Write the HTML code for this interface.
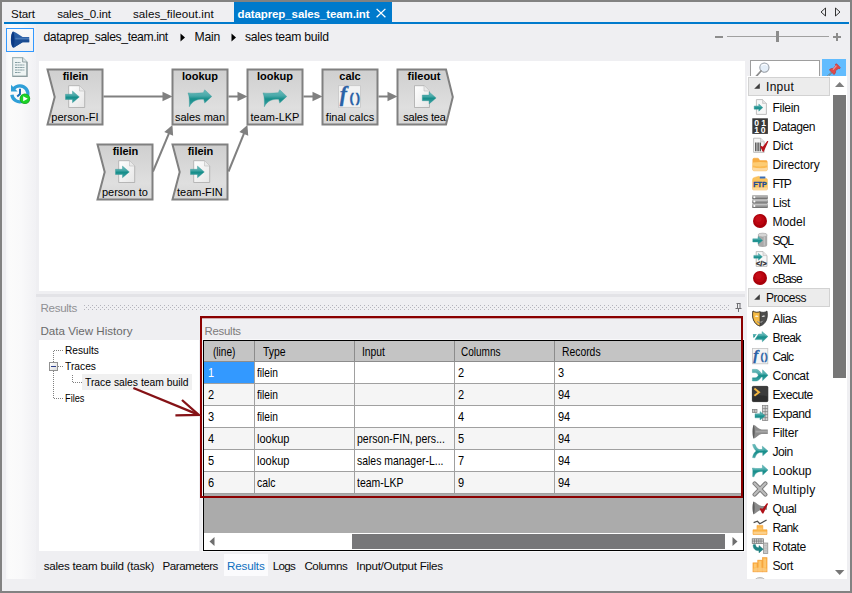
<!DOCTYPE html>
<html><head><meta charset="utf-8"><title>dataprep_sales_team.int</title><style>
html,body{margin:0;padding:0;}
body{width:852px;height:593px;overflow:hidden;background:#efeff2;position:relative;font-family:"Liberation Sans",sans-serif;font-size:11.4px;color:#0a0a0a;}
.a{position:absolute;}
.t{position:absolute;white-space:nowrap;line-height:14px;height:14px;}
.ms{font-size:11px;color:#000;}
svg{position:absolute;overflow:visible;}

.pi{position:absolute;left:772px;white-space:nowrap;line-height:14px;height:14px;font-size:11.4px;color:#1e1e1e;}
</style></head><body>
<div class="a" style="left:0px;top:0px;width:852px;height:2px;background:#828282"></div>
<div class="a" style="left:0px;top:0px;width:2px;height:593px;background:#828282"></div>
<div class="a" style="left:850px;top:0px;width:2px;height:593px;background:#828282"></div>
<div class="a" style="left:0px;top:591px;width:852px;height:2px;background:#828282"></div>
<div class="a" style="left:4px;top:22px;width:845px;height:2px;background:#007acc"></div>
<div class="a" style="left:234px;top:2px;width:158px;height:20px;background:#007acc"></div>
<div class="t" style="left:11px;top:7px;font-size:11.6px;letter-spacing:-0.100px;">Start</div>
<div class="t" style="left:57.2px;top:7px;font-size:11.6px;letter-spacing:-0.169px;">sales_0.int</div>
<div class="t" style="left:133px;top:7px;font-size:11.6px;letter-spacing:0.046px;">sales_fileout.int</div>
<div class="t" style="left:237.5px;top:7px;font-size:11.5px;letter-spacing:-0.097px;color:#fff;font-weight:bold;">dataprep_sales_team.int</div>
<svg style="left:376px;top:8px" width="10" height="10" viewBox="0 0 10 10"><path d="M0.6 0.9 L9.4 9.3 M9.4 0.9 L0.6 9.3" stroke="#fff" stroke-width="1.3" fill="none"/></svg>
<svg style="left:820px;top:7px" width="22" height="10" viewBox="0 0 22 10"><path d="M5.5 1 L5.5 9 L1 5 Z" fill="none" stroke="#1e1e1e" stroke-width="0.9"/><path d="M15.5 1 L15.5 9 L20 5 Z" fill="none" stroke="#1e1e1e" stroke-width="0.9"/></svg>
<div class="a" style="left:6px;top:24px;width:30px;height:555px;background:linear-gradient(90deg,#f6f6f8 0,#fbfbfb 10%,#f9f9fa 50%,#f1f1f4 100%)"></div>
<div class="a" style="left:6px;top:28px;width:27px;height:23px;border:1px solid #3399ff;background:linear-gradient(180deg,#fafafa,#f0f0f2);width:26px;height:22px"></div>
<svg style="left:10px;top:31px" width="20" height="17" viewBox="0 0 20 17"><path d="M3 0.4 C0.2 2.8 0.2 14.2 3 16.6 C4 16.6 5 16 6 15.2 L12.6 11.2 L19.2 11.2 L19.2 6 L12.6 6 L6 1.8 C5 1 4 0.4 3 0.4 Z" fill="#2a5fa6"/><path d="M3 8.5 L3 16.6 C4 16.6 5 16 6 15.2 L12.6 11.2 L19.2 11.2 L19.2 8.5 Z" fill="#1a4c92"/><path d="M3 0.5 C0.4 3 0.4 14 3 16.5 C5 13.4 5 3.6 3 0.5 Z" fill="#0b3a84"/><path d="M5.4 7.6 L19 7.6" stroke="#6a98cc" stroke-width="1.6" opacity="0.5"/></svg>
<svg style="left:12px;top:57px" width="16" height="20" viewBox="0 0 16 20"><path d="M0.6 0.6 L10.6 0.6 L15 5 L15 19.4 L0.6 19.4 Z" fill="#eef4f4" stroke="#a4b6b8" stroke-width="1.2"/><path d="M1 19.4 H15 V5" fill="none" stroke="#8c9c9e" stroke-width="1.1"/><path d="M10.6 0.6 L10.6 5 L15 5" fill="#dfe9e9" stroke="#8c9c9e" stroke-width="0.9"/><path d="M3 5.5 H8.5 M3 8 H12.4 M3 10.5 H12.4 M3 13 H12.4 M3 15.5 H8.5" stroke="#6a888e" stroke-width="1" stroke-dasharray="2.6 0.5 1.6 0.4" opacity="0.8"/></svg>
<svg style="left:10px;top:84px" width="21" height="21" viewBox="0 0 21 21"><path d="M1.9 10.8 A8 8 0 1 0 3.6 4.8" fill="none" stroke="#2f9fd8" stroke-width="3.3"/><path d="M1 0.7 L1 7.4 L7.6 7.4 Z" fill="#2f9fd8"/><path d="M10 4.8 V10 L7.2 12.4" fill="none" stroke="#1a6eb8" stroke-width="2"/><circle cx="14.9" cy="14.7" r="5.3" fill="#1fa82a"/><circle cx="14.9" cy="14.7" r="4.5" fill="#1ad426"/><path d="M13.2 12.2 L17.8 14.7 L13.2 17.2 Z" fill="#fff"/></svg>
<div class="t" style="left:43.4px;top:30px;font-size:12.2px;letter-spacing:-0.392px;">dataprep_sales_team.int</div>
<div class="t" style="left:194.5px;top:30px;font-size:12.2px;letter-spacing:-0.236px;">Main</div>
<div class="t" style="left:245px;top:30px;font-size:12.2px;letter-spacing:-0.276px;">sales team build</div>
<svg style="left:180px;top:33px" width="6" height="9" viewBox="0 0 6 9"><path d="M0.5 0.5 L5 4.5 L0.5 8.5 Z" fill="#000"/></svg>
<svg style="left:231px;top:33px" width="6" height="9" viewBox="0 0 6 9"><path d="M0.5 0.5 L5 4.5 L0.5 8.5 Z" fill="#000"/></svg>
<div class="a" style="left:715px;top:36px;width:8px;height:2px;background:#8c8c8c"></div>
<div class="a" style="left:727px;top:36px;width:102px;height:1px;background:#a0a0a0"></div>
<div class="a" style="left:776px;top:31px;width:3px;height:11px;background:#8c8c8c"></div>
<div class="a" style="left:833px;top:36px;width:8px;height:2px;background:#8c8c8c"></div>
<div class="a" style="left:836px;top:33px;width:2px;height:8px;background:#8c8c8c"></div>
<div class="a" style="left:39px;top:61px;width:706px;height:230px;background:#fff"></div>
<svg style="left:0;top:0" width="852" height="593" viewBox="0 0 852 593" font-family="Liberation Sans, sans-serif"><defs><linearGradient id="ng" x1="0" y1="0" x2="0" y2="1"><stop offset="0" stop-color="#cfcfcf"/><stop offset="0.7" stop-color="#dfdfdf"/><stop offset="1" stop-color="#d6d6d6"/></linearGradient><linearGradient id="tg" x1="0" y1="0" x2="0" y2="1"><stop offset="0" stop-color="#6cbcbc"/><stop offset="0.36" stop-color="#48a8a8"/><stop offset="0.54" stop-color="#168e8a"/><stop offset="0.8" stop-color="#2f9a9a"/><stop offset="1" stop-color="#48a8a8"/></linearGradient><linearGradient id="pg" x1="0" y1="0" x2="1" y2="1"><stop offset="0" stop-color="#ffffff"/><stop offset="1" stop-color="#e6e6e6"/></linearGradient></defs><path d="M103.5 96.5 H166.5" stroke="#808080" stroke-width="2" fill="none"/><path d="M172.5 96.5 L162.5 91.7 L162.5 101.3 Z" fill="#808080"/><path d="M228.5 96.5 H241.5" stroke="#808080" stroke-width="2" fill="none"/><path d="M247.5 96.5 L237.5 91.7 L237.5 101.3 Z" fill="#808080"/><path d="M303.5 96.5 H316.5" stroke="#808080" stroke-width="2" fill="none"/><path d="M322.5 96.5 L312.5 91.7 L312.5 101.3 Z" fill="#808080"/><path d="M378.5 96.5 H391.5" stroke="#808080" stroke-width="2" fill="none"/><path d="M397.5 96.5 L387.5 91.7 L387.5 101.3 Z" fill="#808080"/><path d="M153 171.5 L169.47 132.01" stroke="#808080" stroke-width="2" fill="none"/><path d="M172.4 125 L173.13 135.71 L164.27 132.01 Z" fill="#808080"/><path d="M228.5 171.5 L244.54 132.04" stroke="#808080" stroke-width="2" fill="none"/><path d="M247.4 125 L248.23 135.70 L239.34 132.09 Z" fill="#808080"/><path d="M47.5 69.5 L102.5 69.5 L102.5 124.5 L47.5 124.5 L54.7 97.0 Z" fill="url(#ng)" stroke="#808080" stroke-width="2" stroke-linejoin="miter"/><text x="75.5" y="80.3" text-anchor="middle" font-weight="bold" font-size="11" fill="#000">filein</text><text x="74.9" y="120.7" text-anchor="middle" font-size="11" fill="#000">person-FI</text><path d="M68.7 85.7 L79.5 85.7 L84.7 91.0 L84.7 107.5 L68.7 107.5 Z" fill="url(#pg)" stroke="#a9a9a9" stroke-width="0.8"/><path d="M79.5 85.7 L79.5 91.0 L84.7 91.0" fill="#e9e9e9" stroke="#bdbdbd" stroke-width="0.6"/><path d="M65.5 94.3 L72.5 94.3 L72.5 91.1 L79.3 96.9 L72.5 102.7 L72.5 99.5 L65.5 99.5 Z" fill="url(#tg)" stroke="#2e9494" stroke-width="0.4" stroke-linejoin="round"/><path d="M172.5 69.5 H227.5 V124.5 H172.5 Z" fill="url(#ng)" stroke="#808080" stroke-width="2" stroke-linejoin="miter"/><text x="200.0" y="80.3" text-anchor="middle" font-weight="bold" font-size="11" fill="#000">lookup</text><text x="200.0" y="120.7" text-anchor="middle" font-size="11" fill="#000">sales man</text><path d="M188.0 92.9 C192.5 93.5 198.5 93.1 203.3 92.7 L204.7 89.8 L211.8 96.4 L204.7 103.0 L203.7 99.2 C197.5 99.0 192.5 100.5 189.3 106.8 C189.5 101.5 189.5 96.5 188.0 92.9 Z" fill="url(#tg)" stroke="#3a9c9c" stroke-width="0.4" stroke-linejoin="round"/><path d="M247.5 69.5 H302.5 V124.5 H247.5 Z" fill="url(#ng)" stroke="#808080" stroke-width="2" stroke-linejoin="miter"/><text x="275.0" y="80.3" text-anchor="middle" font-weight="bold" font-size="11" fill="#000">lookup</text><text x="275.0" y="120.7" text-anchor="middle" font-size="11" fill="#000">team-LKP</text><path d="M263.0 92.9 C267.5 93.5 273.5 93.1 278.3 92.7 L279.7 89.8 L286.8 96.4 L279.7 103.0 L278.7 99.2 C272.5 99.0 267.5 100.5 264.3 106.8 C264.5 101.5 264.5 96.5 263.0 92.9 Z" fill="url(#tg)" stroke="#3a9c9c" stroke-width="0.4" stroke-linejoin="round"/><path d="M322.5 69.5 H377.5 V124.5 H322.5 Z" fill="url(#ng)" stroke="#808080" stroke-width="2" stroke-linejoin="miter"/><text x="350.0" y="80.3" text-anchor="middle" font-weight="bold" font-size="11" fill="#000">calc</text><text x="350.0" y="120.7" text-anchor="middle" font-size="11" fill="#000">final calcs</text><rect x="338.5" y="85.7" width="22" height="21.6" fill="#f3f3f3" stroke="#c6c6c6" stroke-width="0.8"/><text x="339.7" y="100.9" font-family="Liberation Serif, serif" font-style="italic" font-weight="bold" font-size="21.5" fill="#2a62a6" stroke="#2a62a6" stroke-width="0.3">f</text><text x="349.5" y="101.7" font-family="Liberation Sans, sans-serif" font-weight="bold" font-size="13" fill="#2a62a6" stroke="#2a62a6" stroke-width="0.3">(</text><text x="355.7" y="101.7" font-family="Liberation Sans, sans-serif" font-weight="bold" font-size="13" fill="#2a62a6" stroke="#2a62a6" stroke-width="0.3">)</text><path d="M397.5 69.5 L446.0 69.5 L452.8 97.0 L446.0 124.5 L397.5 124.5 Z" fill="url(#ng)"/><text x="424.0" y="80.3" text-anchor="middle" font-weight="bold" font-size="11" fill="#000">fileout</text><clipPath id="c1"><rect x="397.5" y="109.5" width="48.3" height="15"/></clipPath><g clip-path="url(#c1)"><text x="403.3" y="120.7" font-size="11" fill="#000" textLength="51.6" lengthAdjust="spacing">sales team</text></g><path d="M397.5 69.5 L446.0 69.5 L452.8 97.0 L446.0 124.5 L397.5 124.5 Z" fill="none" stroke="#808080" stroke-width="2" stroke-linejoin="miter"/><path d="M414.5 85.7 L424.0 85.7 L429.5 91.0 L429.5 107.5 L414.5 107.5 Z" fill="url(#pg)" stroke="#a9a9a9" stroke-width="0.8"/><path d="M424.0 85.7 L424.0 91.0 L429.5 91.0" fill="#e9e9e9" stroke="#bdbdbd" stroke-width="0.6"/><path d="M422.3 95.1 L429.1 95.1 L429.1 91.9 L436.1 97.9 L429.1 103.9 L429.1 100.7 L422.3 100.7 Z" fill="url(#tg)" stroke="#2e9494" stroke-width="0.4" stroke-linejoin="round"/><path d="M97.5 144.5 L152.5 144.5 L152.5 199.5 L97.5 199.5 L104.7 172.0 Z" fill="url(#ng)" stroke="#808080" stroke-width="2" stroke-linejoin="miter"/><text x="125.5" y="155.3" text-anchor="middle" font-weight="bold" font-size="11" fill="#000">filein</text><text x="124.9" y="195.7" text-anchor="middle" font-size="11" fill="#000">person to</text><path d="M118.7 160.7 L129.5 160.7 L134.7 166.0 L134.7 182.5 L118.7 182.5 Z" fill="url(#pg)" stroke="#a9a9a9" stroke-width="0.8"/><path d="M129.5 160.7 L129.5 166.0 L134.7 166.0" fill="#e9e9e9" stroke="#bdbdbd" stroke-width="0.6"/><path d="M115.5 169.3 L122.5 169.3 L122.5 166.1 L129.3 171.9 L122.5 177.7 L122.5 174.5 L115.5 174.5 Z" fill="url(#tg)" stroke="#2e9494" stroke-width="0.4" stroke-linejoin="round"/><path d="M172.5 144.5 L227.5 144.5 L227.5 199.5 L172.5 199.5 L179.7 172.0 Z" fill="url(#ng)" stroke="#808080" stroke-width="2" stroke-linejoin="miter"/><text x="200.5" y="155.3" text-anchor="middle" font-weight="bold" font-size="11" fill="#000">filein</text><text x="199.9" y="195.7" text-anchor="middle" font-size="11" fill="#000">team-FIN</text><path d="M193.7 160.7 L204.5 160.7 L209.7 166.0 L209.7 182.5 L193.7 182.5 Z" fill="url(#pg)" stroke="#a9a9a9" stroke-width="0.8"/><path d="M204.5 160.7 L204.5 166.0 L209.7 166.0" fill="#e9e9e9" stroke="#bdbdbd" stroke-width="0.6"/><path d="M190.5 169.3 L197.5 169.3 L197.5 166.1 L204.3 171.9 L197.5 177.7 L197.5 174.5 L190.5 174.5 Z" fill="url(#tg)" stroke="#2e9494" stroke-width="0.4" stroke-linejoin="round"/></svg>
<div class="a" style="left:36px;top:294px;width:709px;height:3px;background:#e3e3e7"></div>
<div class="a" style="left:750px;top:60px;width:68px;height:17px;border:1px solid #9e9e9e;background:#fff"></div>
<svg style="left:755px;top:62px" width="15" height="16" viewBox="0 0 15 16"><circle cx="9.4" cy="5.6" r="4.6" fill="#e4eef8" stroke="#9aa0a8" stroke-width="1.1"/><path d="M6.4 4.2 A3.4 3.4 0 0 1 12 3.6" fill="none" stroke="#fff" stroke-width="1"/><path d="M6 9 L1 14.6" stroke="#8e8e8e" stroke-width="1.8" stroke-linecap="round"/></svg>
<div class="a" style="left:822px;top:59px;width:24px;height:17px;background:#62bcfe;overflow:hidden"><svg style="left:3.4px;top:4px" width="16" height="16" viewBox="0 0 16 16"><path d="M0.4 15.6 L6.6 9.4" stroke="#5a7a8a" stroke-width="1.4" stroke-linecap="round"/><path d="M0.4 15.6 L6.6 9.4" stroke="#e8f0f4" stroke-width="0.6" stroke-dasharray="1 1"/><path d="M4.4 7 C5.4 5.4 7 5.2 8.2 5.6 L10.6 2.6 C10 1.6 10.6 0.6 11.6 0.8 L15.2 4.4 C15.4 5.4 14.4 6 13.4 5.4 L10.4 7.8 C10.8 9 10.6 10.6 9 11.6 Z" fill="#e04a4a" stroke="#b83030" stroke-width="0.6" stroke-linejoin="round"/><path d="M8 6.6 L11.4 2.6" stroke="#f4a0a0" stroke-width="1.2" opacity="0.9"/></svg></div>
<div class="a" style="left:747px;top:76px;width:100px;height:503px;background:#fff;overflow:hidden">
<div class="a" style="left:1px;top:1px;width:80px;height:17px;border:1px solid #d2d2d2;background:#ececec"></div><svg style="left:6.899999999999977px;top:6.6px" width="6" height="6" viewBox="0 0 6 6"><path d="M5.8 0.2 V5.8 H0.2 Z" fill="#3c3c3c"/></svg><div class="t" style="left:19px;top:3.6px;font-size:12px;letter-spacing:0.302px;">Input</div>
<svg style="left:5px;top:23px" width="16" height="16" viewBox="0 0 16 16"><path d="M4.4 0.6 L10.6 0.6 L14.4 4.4 L14.4 15.4 L4.4 15.4 Z" fill="#f7f7f7" stroke="#b0b0b0" stroke-width="0.8"/><path d="M10.6 0.6 V4.4 H14.4" fill="#e4e4e4" stroke="#b8b8b8" stroke-width="0.6"/><path d="M2.2 7 H6.8 V5 L10.8 8.6 L6.8 12.2 V10.2 H2.2 Z" fill="url(#tg)" stroke="#2e9494" stroke-width="0.4"/></svg>
<div class="t" style="left:25.5px;top:24.8px;font-size:12.1px;letter-spacing:-0.336px;">Filein</div>
<svg style="left:5px;top:42px" width="16" height="16" viewBox="0 0 16 16"><rect x="0.3" y="0.3" width="15.6" height="15.6" fill="#383838"/><text x="2.2" y="7.8" font-family="Liberation Sans, sans-serif" font-weight="bold" font-size="8.6" fill="#fff">0</text><text x="9.2" y="7.8" font-family="Liberation Sans, sans-serif" font-weight="bold" font-size="8.6" fill="#fff">1</text><text x="2.2" y="15.2" font-family="Liberation Sans, sans-serif" font-weight="bold" font-size="8.6" fill="#fff">1</text><text x="8.8" y="15.2" font-family="Liberation Sans, sans-serif" font-weight="bold" font-size="8.6" fill="#fff">0</text></svg>
<div class="t" style="left:25.5px;top:43.8px;font-size:12.1px;letter-spacing:-0.464px;">Datagen</div>
<svg style="left:5px;top:61px" width="16" height="16" viewBox="0 0 16 16"><path d="M1.6 1.2 L8.6 1.2 L12.2 4.8 L12.2 15.4 L1.6 15.4 Z" fill="#f7f7f7" stroke="#b0b0b0" stroke-width="0.8"/><path d="M8.6 1.2 V4.8 H12.2" fill="#e6e6e6" stroke="#b8b8b8" stroke-width="0.6"/><path d="M3.8 5.6 V14.2 M6.1 5.6 V14.2 M8.3 5.6 V14.2" stroke="#5a5a5a" stroke-width="1.5"/><path d="M9 9.6 L11.2 14.2 L15.6 4.6 L11 10.6 Z" fill="#b8141c" stroke="#b8141c" stroke-width="1.3" stroke-linejoin="round"/></svg>
<div class="t" style="left:25.5px;top:62.8px;font-size:12.1px;letter-spacing:-0.185px;">Dict</div>
<svg style="left:5px;top:80px" width="16" height="16" viewBox="0 0 16 16"><path d="M0.8 3.6 Q0.8 2.2 2.2 2.2 H5.6 Q6.6 2.2 7 3.2 L7.6 4.6 H14 Q15.2 4.6 15.2 5.8 V13.6 Q15.2 14.8 14 14.8 H2 Q0.8 14.8 0.8 13.6 Z" fill="#f8ad42" stroke="#f5a336" stroke-width="0.5"/><path d="M0.8 6.6 Q8 5.4 15.2 6.6 V13.6 Q15.2 14.8 14 14.8 H2 Q0.8 14.8 0.8 13.6 Z" fill="#fdcc74"/><path d="M0.8 9.4 Q8 11.4 15.2 9.4 V11.4 Q8 13 0.8 11.4 Z" fill="#fbb84e" opacity="0.9"/><path d="M0.8 11.4 Q8 13 15.2 11.4 V13.6 Q15.2 14.8 14 14.8 H2 Q0.8 14.8 0.8 13.6 Z" fill="#fdd9a0"/></svg>
<div class="t" style="left:25.5px;top:81.8px;font-size:12.1px;letter-spacing:-0.145px;">Directory</div>
<svg style="left:5px;top:99px" width="16" height="16" viewBox="0 0 16 16"><path d="M0.6 4.6 Q0.6 2.6 2.6 2.4 L6.4 1.4 Q7.6 1.2 8 2.4 L8.4 3.6 H14.2 Q15.4 3.6 15.4 4.8 V13.8 Q15.4 15 14.2 15 H1.8 Q0.6 15 0.6 13.8 Z" fill="#fbc35c" stroke="#f7b044" stroke-width="0.5"/><rect x="7.8" y="1.4" width="5.6" height="2.2" rx="0.4" fill="#3a6cb4"/><path d="M0.6 12.6 H15.4 V13.8 Q15.4 15 14.2 15 H1.8 Q0.6 15 0.6 13.8 Z" fill="#fdd898"/><text x="8" y="12.2" text-anchor="middle" font-family="Liberation Sans, sans-serif" font-weight="bold" font-size="8" fill="#1c4a98" stroke="#1c4a98" stroke-width="0.3" textLength="13.6" lengthAdjust="spacingAndGlyphs">FTP</text></svg>
<div class="t" style="left:25.5px;top:100.8px;font-size:12.1px;letter-spacing:-1.785px;">FTP</div>
<svg style="left:5px;top:118px" width="16" height="16" viewBox="0 0 16 16"><rect x="0.2" y="1.2" width="15.6" height="4.1" rx="0.9" fill="#767676"/><rect x="0.2" y="1.2" width="15.6" height="2" rx="0.9" fill="#c2c2c2"/><rect x="0.6" y="2.5" width="14.8" height="1.5" fill="#9a9a9a"/><circle cx="2.4" cy="3.2" r="1" fill="#fff"/><rect x="0.2" y="5.6" width="15.6" height="4.1" rx="0.9" fill="#767676"/><rect x="0.2" y="5.6" width="15.6" height="2" rx="0.9" fill="#c2c2c2"/><rect x="0.6" y="6.8999999999999995" width="14.8" height="1.5" fill="#9a9a9a"/><circle cx="2.4" cy="7.6" r="1" fill="#fff"/><rect x="0.2" y="10" width="15.6" height="4.1" rx="0.9" fill="#767676"/><rect x="0.2" y="10" width="15.6" height="2" rx="0.9" fill="#c2c2c2"/><rect x="0.6" y="11.3" width="14.8" height="1.5" fill="#9a9a9a"/><circle cx="2.4" cy="12" r="1" fill="#fff"/></svg>
<div class="t" style="left:25.5px;top:119.8px;font-size:12.1px;letter-spacing:-0.332px;">List</div>
<svg style="left:5px;top:137px" width="16" height="16" viewBox="0 0 16 16"><circle cx="8" cy="8" r="7" fill="#a8000a"/><circle cx="7.4" cy="7" r="5.2" fill="#c00612" opacity="0.85"/><circle cx="6.6" cy="6" r="3" fill="#cc1420" opacity="0.6"/></svg>
<div class="t" style="left:25.5px;top:138.8px;font-size:12.1px;letter-spacing:0.029px;">Model</div>
<svg style="left:5px;top:156px" width="16" height="16" viewBox="0 0 16 16"><path d="M6 3 V13 A4.6 1.9 0 0 0 15.2 13 V3 Z" fill="#a9a9a9"/><ellipse cx="10.6" cy="3" rx="4.6" ry="1.9" fill="#d6d6d6" stroke="#9a9a9a" stroke-width="0.5"/><path d="M12.4 4.6 V13.6" stroke="#c8c8c8" stroke-width="1.6" opacity="0.8"/><path d="M0.8 6.8 H6 V4.6 L10.6 8.4 L6 12.2 V10 H0.8 Z" fill="url(#tg)" stroke="#2e9494" stroke-width="0.4"/></svg>
<div class="t" style="left:25.5px;top:157.8px;font-size:12.1px;letter-spacing:-1.371px;">SQL</div>
<svg style="left:5px;top:175px" width="16" height="16" viewBox="0 0 16 16"><path d="M4.2 0.6 L11 0.6 L15 4.6 L15 15.4 L4.2 15.4 Z" fill="#f7f7f7" stroke="#b0b0b0" stroke-width="0.8"/><path d="M11 0.6 V4.6 H15" fill="#e4e4e4" stroke="#b8b8b8" stroke-width="0.6"/><path d="M1.8 4.4 H6.4 V2.4 L10.4 5.8 L6.4 9.2 V7.2 H1.8 Z" fill="url(#tg)" stroke="#2e9494" stroke-width="0.4"/><text x="9.4" y="14.6" text-anchor="middle" font-family="Liberation Sans, sans-serif" font-weight="bold" font-size="7" fill="#1e1e2a" stroke="#1e1e2a" stroke-width="0.3" textLength="10.6" lengthAdjust="spacingAndGlyphs">&lt;/&gt;</text></svg>
<div class="t" style="left:25.5px;top:176.8px;font-size:12.1px;letter-spacing:-0.694px;">XML</div>
<svg style="left:5px;top:194px" width="16" height="16" viewBox="0 0 16 16"><circle cx="8" cy="8" r="7" fill="#a8000a"/><circle cx="7.4" cy="7" r="5.2" fill="#c00612" opacity="0.85"/><circle cx="6.6" cy="6" r="3" fill="#cc1420" opacity="0.6"/></svg>
<div class="t" style="left:25.5px;top:195.8px;font-size:12.1px;letter-spacing:-0.826px;">cBase</div>
<div class="a" style="left:1px;top:212px;width:80px;height:17px;border:1px solid #d2d2d2;background:#ececec"></div><svg style="left:6.899999999999977px;top:217.6px" width="6" height="6" viewBox="0 0 6 6"><path d="M5.8 0.2 V5.8 H0.2 Z" fill="#3c3c3c"/></svg><div class="t" style="left:19px;top:214.6px;font-size:12px;letter-spacing:-0.478px;">Process</div>
<svg style="left:5px;top:234px" width="16" height="16" viewBox="0 0 16 16"><path d="M1 1 C2.6 2.6 5.6 2.6 8 1.8 C10.4 2.6 13.4 2.6 15 1 C15.8 5 15.4 9.6 13 12.6 C11.6 14.4 9.8 15.6 8 16 C6.2 15.6 4.4 14.4 3 12.6 C0.6 9.6 0.2 5 1 1 Z" fill="#4c4c4c" stroke="#2e2e2e" stroke-width="0.7"/><path d="M1 1 C2.6 2.6 5.6 2.6 8 1.8 L8 16 C6.2 15.6 4.4 14.4 3 12.6 C0.6 9.6 0.2 5 1 1 Z" fill="#f5bb44" stroke="#3a3226" stroke-width="0.7"/><path d="M2.8 6.2 Q4.6 4.8 6.6 6.4 Q4.6 7.4 2.8 6.2 Z" fill="#fff"/><path d="M9.6 6.4 Q11.6 4.8 13.4 6 Q11.6 7.4 9.6 6.4 Z" fill="#fff"/><path d="M4.4 10.6 Q8 13.4 11.4 10.6 Q8 15.6 4.4 10.6 Z" fill="#fff"/><path d="M5.2 11.6 Q8 14 10.6 11.6" stroke="#3a3a3a" stroke-width="0.7" fill="none"/></svg>
<div class="t" style="left:25.5px;top:235.8px;font-size:12.1px;letter-spacing:-0.406px;">Alias</div>
<svg style="left:5px;top:253px" width="16" height="16" viewBox="0 0 16 16"><path d="M0.8 5 L4.8 5 L1.6 9.2 Z" fill="url(#tg)"/><path d="M6.6 5 L10.2 5 L10 2.6 L15.9 7.4 L10.4 12.8 L10.2 10.6 L3 10.6 Z" fill="url(#tg)" stroke="#2e9494" stroke-width="0.4" stroke-linejoin="round"/><path d="M6.8 5.8 L10.6 5.8 L10.6 4 L14.4 7.2" stroke="#6cc0c0" stroke-width="0.8" fill="none" opacity="0.7"/></svg>
<div class="t" style="left:25.5px;top:254.8px;font-size:12.1px;letter-spacing:-0.682px;">Break</div>
<svg style="left:5px;top:272px" width="16" height="16" viewBox="0 0 16 16"><rect x="0.4" y="0.4" width="15.4" height="15.4" fill="#f4f4f4" stroke="#c4c4c4" stroke-width="0.8"/><text x="1.2" y="11.6" font-family="Liberation Serif, serif" font-style="italic" font-weight="bold" font-size="15.2" fill="#2a62a6" stroke="#2a62a6" stroke-width="0.3">f</text><text x="8.4" y="12.2" font-family="Liberation Sans, sans-serif" font-weight="bold" font-size="9.4" fill="#2a62a6" stroke="#2a62a6" stroke-width="0.3">(</text><text x="12.6" y="12.2" font-family="Liberation Sans, sans-serif" font-weight="bold" font-size="9.4" fill="#2a62a6" stroke="#2a62a6" stroke-width="0.3">)</text></svg>
<div class="t" style="left:25.5px;top:273.8px;font-size:12.1px;letter-spacing:-0.877px;">Calc</div>
<svg style="left:5px;top:291px" width="16" height="16" viewBox="0 0 16 16"><path d="M0.4 2.4 H4 C7 2.4 8.2 5.2 9.4 6.4 H10.6 V2.8 L16 8.2 L10.6 13.6 V10 H9.4 C8.2 11.2 7 14 4 14 H0.4 V10.8 H3.2 C4.8 10.8 5.6 9.4 6.4 8.2 C5.6 7 4.8 5.6 3.2 5.6 H0.4 Z" fill="url(#tg)" stroke="#2e9494" stroke-width="0.4" stroke-linejoin="round"/><path d="M0.8 3.2 H4 C6.4 3.2 7.6 5.6 9 7 H11 V4.4 L14.6 8" stroke="#6cc0c0" stroke-width="0.8" fill="none" opacity="0.6"/></svg>
<div class="t" style="left:25.5px;top:292.8px;font-size:12.1px;letter-spacing:-0.340px;">Concat</div>
<svg style="left:5px;top:310px" width="16" height="16" viewBox="0 0 16 16"><rect x="0.4" y="0.4" width="15.4" height="15.2" rx="0.8" fill="#3c3c3c" stroke="#1c1c1c" stroke-width="0.8"/><path d="M0.8 10.6 C5 8.4 10 9 15.4 10.4 V15.2 H0.8 Z" fill="#2c2c2c" opacity="0.9"/><path d="M2.4 2.6 L7 6.2 L2.4 9.8" fill="none" stroke="#f5b840" stroke-width="1.9" stroke-linejoin="miter"/></svg>
<div class="t" style="left:25.5px;top:311.8px;font-size:12.1px;letter-spacing:-0.475px;">Execute</div>
<svg style="left:5px;top:329px" width="16" height="16" viewBox="0 0 16 16"><rect x="10.6" y="0.6" width="5.2" height="15" fill="#d6d6d6" stroke="#7c7c7c" stroke-width="0.7"/><path d="M10.6 3.6 H15.8" stroke="#7c7c7c" stroke-width="0.7"/><path d="M10.6 6.6 H15.8" stroke="#7c7c7c" stroke-width="0.7"/><path d="M10.6 9.6 H15.8" stroke="#7c7c7c" stroke-width="0.7"/><path d="M10.6 12.6 H15.8" stroke="#7c7c7c" stroke-width="0.7"/><path d="M13.2 0.6 V15.6" stroke="#7c7c7c" stroke-width="0.7"/><rect x="0.4" y="4.4" width="4.6" height="3.2" fill="#c8c8c8" stroke="#7c7c7c" stroke-width="0.7"/><path d="M2.7 4.4 V7.6" stroke="#7c7c7c" stroke-width="0.7"/><path d="M3 8.8 H8 V6.6 L13.2 10.8 L8 15 V12.8 H3 Z" fill="url(#tg)" stroke="#2e9494" stroke-width="0.4" stroke-linejoin="round"/></svg>
<div class="t" style="left:25.5px;top:330.8px;font-size:12.1px;letter-spacing:-0.473px;">Expand</div>
<svg style="left:5px;top:348px" width="16" height="16" viewBox="0 0 16 16"><path d="M1.6 0.8 C0.2 3 0.2 12.4 1.6 14.8 C4.2 13.8 6.6 10.4 9.6 10 L15.8 10 L15.8 5.6 L9.6 5.6 C6.6 5.2 4.2 1.8 1.6 0.8 Z" fill="#8c8c8c"/><path d="M1.6 1 C0.4 3.2 0.4 12.2 1.6 14.6 C3 12 3 3.6 1.6 1 Z" fill="#5c5c5c"/><path d="M3.6 7.6 H15.6" stroke="#b8b8b8" stroke-width="1.8" opacity="0.6"/></svg>
<div class="t" style="left:25.5px;top:349.8px;font-size:12.1px;letter-spacing:-0.232px;">Filter</div>
<svg style="left:5px;top:367px" width="16" height="16" viewBox="0 0 16 16"><path d="M0.6 1.6 L3 1.4 C4 4 5.4 5.8 7.4 6.6 L10.6 6.4 L10.4 3.2 L16 8 L10.8 12.8 L10.6 9.6 L7.4 9.6 C5 10.4 3.6 12.4 3 14.8 L0.6 14.6 C1 11.6 2.2 9.6 4.2 8 C2.4 6.4 1.2 4.2 0.6 1.6 Z" fill="url(#tg)" stroke="#2e9494" stroke-width="0.4" stroke-linejoin="round"/><path d="M1.4 2 C2.6 4.6 4.4 6.8 7 7.4 L11.4 7.2 L11.2 4.8 L14.6 7.8" stroke="#6cc0c0" stroke-width="0.8" fill="none" opacity="0.6"/></svg>
<div class="t" style="left:25.5px;top:368.8px;font-size:12.1px;letter-spacing:-0.524px;">Join</div>
<svg style="left:5px;top:386px" width="16" height="16" viewBox="0 0 16 16"><path d="M0.4 6 C4 6.8 8 6.6 10.6 6.2 L10.4 3 L16 8 L10.8 13 L10.6 9.4 C6 9.4 3.2 10.6 2 14.8 L0.6 14.6 C0.6 11.6 1.2 9 0.4 6 Z" fill="url(#tg)" stroke="#2e9494" stroke-width="0.4" stroke-linejoin="round"/><path d="M1 6.8 C4 7.4 8 7.2 11.4 6.8 L11.2 4.6 L14.6 7.8" stroke="#6cc0c0" stroke-width="0.8" fill="none" opacity="0.6"/></svg>
<div class="t" style="left:25.5px;top:387.8px;font-size:12.1px;letter-spacing:-0.116px;">Lookup</div>
<svg style="left:5px;top:405px" width="16" height="16" viewBox="0 0 16 16"><path d="M2.6 2.4 L13.4 13.6 M13.4 2.4 L2.6 13.6" stroke="#7a7a7a" stroke-width="4.2" stroke-linecap="round"/><path d="M2.6 2.4 L13.4 13.6 M13.4 2.4 L2.6 13.6" stroke="#bcbcbc" stroke-width="2.2" stroke-linecap="round"/></svg>
<div class="t" style="left:25.5px;top:406.8px;font-size:12.1px;letter-spacing:0.260px;">Multiply</div>
<svg style="left:5px;top:424px" width="16" height="16" viewBox="0 0 16 16"><path d="M1.6 1.4 C0.2 3.6 0.2 12 1.6 14.4 C4.2 13.4 6.6 10.2 9.6 9.8 L15 9.8 L15 6 L9.6 6 C6.6 5.6 4.2 2.4 1.6 1.4 Z" fill="#8c8c8c"/><path d="M1.6 1.6 C0.4 3.8 0.4 11.8 1.6 14.2 C3 11.6 3 4.2 1.6 1.6 Z" fill="#5c5c5c"/><path d="M8.6 9 L10.8 12.8 L15.2 4 L10.8 9.6 Z" fill="#b01018" stroke="#b01018" stroke-width="1.5" stroke-linejoin="round"/></svg>
<div class="t" style="left:25.5px;top:425.8px;font-size:12.1px;letter-spacing:-0.415px;">Qual</div>
<svg style="left:5px;top:443px" width="16" height="16" viewBox="0 0 16 16"><path d="M1 15.4 V10.8 H5 V6.4 H10.8 V10.8 H15 V15.4 Z" fill="#fbb548" stroke="#f5a030" stroke-width="0.6"/><path d="M1.4 15 V12.6 H14.6 V15 Z" fill="#fdd79c" opacity="0.8"/><path d="M5.4 8.6 H10.4 V10.6 H5.4 Z" fill="#fdc870" opacity="0.8"/><path d="M1.6 3.6 L5.4 2.2 L7.8 4.8 L14.6 1" fill="none" stroke="#4e4e4e" stroke-width="1.3"/></svg>
<div class="t" style="left:25.5px;top:444.8px;font-size:12.1px;letter-spacing:-0.762px;">Rank</div>
<svg style="left:5px;top:462px" width="16" height="16" viewBox="0 0 16 16"><rect x="0.2" y="0.8" width="11.2" height="4.6" fill="#d8d8d8" stroke="#6e6e6e" stroke-width="0.7"/><path d="M2.4 0.8 V5.4" stroke="#6e6e6e" stroke-width="0.7"/><path d="M4.6 0.8 V5.4" stroke="#6e6e6e" stroke-width="0.7"/><path d="M6.8 0.8 V5.4" stroke="#6e6e6e" stroke-width="0.7"/><path d="M9 0.8 V5.4" stroke="#6e6e6e" stroke-width="0.7"/><path d="M0.2 3.1 H11.4" stroke="#6e6e6e" stroke-width="0.7"/><rect x="11.4" y="5" width="4.4" height="10.6" fill="#c8c8c8" stroke="#8a8a8a" stroke-width="0.7"/><path d="M11.4 7.6 H15.8 M11.4 10.2 H15.8 M11.4 12.8 H15.8" stroke="#b0b0b0" stroke-width="0.5"/><path d="M1.2 6.8 L3.4 6.6 C3.6 9 4.8 9.8 7 9.8 V7.6 L11.2 11.2 L7 14.8 V12.6 C3.4 12.8 1 10.8 1.2 6.8 Z" fill="#1f8585" stroke="#167474" stroke-width="0.5" stroke-linejoin="round"/></svg>
<div class="t" style="left:25.5px;top:463.8px;font-size:12.1px;letter-spacing:-0.358px;">Rotate</div>
<svg style="left:5px;top:481px" width="16" height="16" viewBox="0 0 16 16"><rect x="1" y="5.9" width="4.4" height="8.9" fill="#fbb548" stroke="#f59a30" stroke-width="0.7"/><rect x="1.9" y="6.800000000000001" width="2.6" height="3.9000000000000004" fill="#fdc874" opacity="0.9"/><rect x="5.8" y="3.2" width="4.4" height="11.600000000000001" fill="#fbb548" stroke="#f59a30" stroke-width="0.7"/><rect x="6.7" y="4.1000000000000005" width="2.6" height="6.600000000000001" fill="#fdc874" opacity="0.9"/><rect x="10.6" y="0.7" width="4.4" height="14.100000000000001" fill="#fbb548" stroke="#f59a30" stroke-width="0.7"/><rect x="11.5" y="1.6" width="2.6" height="9.100000000000001" fill="#fdc874" opacity="0.9"/><path d="M1.4 11.4 Q8 9.4 14.6 11.6 V14.4 H1.4 Z" fill="#fdd79c" opacity="0.55"/></svg>
<div class="t" style="left:25.5px;top:482.8px;font-size:12.1px;letter-spacing:-0.448px;">Sort</div>
<svg style="left:5px;top:500px" width="16" height="16" viewBox="0 0 16 16"><circle cx="8" cy="8" r="6.6" fill="#d8d8d8" stroke="#b4b4b4" stroke-width="0.8"/></svg>
<svg style="left:88px;top:6px" width="9.4" height="5" viewBox="0 0 9.4 5"><path d="M0 5 L4.7 0 L9.4 5 Z" fill="#7e7e7e"/></svg>
<div class="a" style="left:86px;top:19px;width:13px;height:283px;background:#777"></div>
<svg style="left:88px;top:494px" width="9.4" height="5" viewBox="0 0 9.4 5"><path d="M0 0 L4.7 5 L9.4 0 Z" fill="#767676"/></svg>
</div>
<div class="t" style="left:40.5px;top:301px;font-size:11.6px;letter-spacing:-0.312px;color:#909094">Results</div>
<div class="a" style="left:84px;top:305px;width:646px;height:5px;background-image:radial-gradient(circle at 0.5px 0.5px,#b4b4bc 0.6px,transparent 0.7px),radial-gradient(circle at 0.5px 0.5px,#b4b4bc 0.6px,transparent 0.7px);background-size:4px 4px,4px 4px;background-position:0 0,2px 2px;"></div>
<svg style="left:734px;top:302px" width="9" height="11" viewBox="0 0 9 11"><path d="M2.5 1.5 H6.5 M3.5 1.5 V6 M6 1.5 V6 M1.5 6.5 H7.5 M4.5 6.5 V10" stroke="#6e6e72" stroke-width="1" fill="none"/></svg>
<div class="t" style="left:40.5px;top:324px;font-size:11.6px;letter-spacing:0.001px;color:#6a6a6a">Data View History</div>
<div class="a" style="left:39px;top:340px;width:160px;height:211px;background:#fff"></div>
<div class="a" style="left:53px;top:350px;width:1px;height:49px;background-image:linear-gradient(0deg,#808080 50%,transparent 50%);background-size:1px 2px;"></div>
<div class="a" style="left:54px;top:350px;width:9px;height:1px;background-image:linear-gradient(90deg,#808080 50%,transparent 50%);background-size:2px 1px;"></div>
<div class="a" style="left:58px;top:366px;width:5px;height:1px;background-image:linear-gradient(90deg,#808080 50%,transparent 50%);background-size:2px 1px;"></div>
<div class="a" style="left:54px;top:398px;width:9px;height:1px;background-image:linear-gradient(90deg,#808080 50%,transparent 50%);background-size:2px 1px;"></div>
<div class="a" style="left:72px;top:374px;width:1px;height:9px;background-image:linear-gradient(0deg,#808080 50%,transparent 50%);background-size:1px 2px;"></div>
<div class="a" style="left:73px;top:382px;width:9px;height:1px;background-image:linear-gradient(90deg,#808080 50%,transparent 50%);background-size:2px 1px;"></div>
<div class="a" style="left:49px;top:362px;width:7px;height:7px;border:1px solid #919191;background:linear-gradient(135deg,#fff,#dcdcdc)"></div>
<div class="a" style="left:51px;top:366px;width:5px;height:1px;background:#2b3f8c"></div>
<div class="a" style="left:82px;top:374px;width:110px;height:16px;background:#f0f0f0"></div>
<div class="t ms" style="left:64.8px;top:342.6px;font-size:11.4px;transform:scaleX(0.8918);transform-origin:0 50%;">Results</div>
<div class="t ms" style="left:64.8px;top:358.6px;font-size:11.4px;transform:scaleX(0.9007);transform-origin:0 50%;">Traces</div>
<div class="t ms" style="left:84.8px;top:374.8px;font-size:11.4px;transform:scaleX(0.9075);transform-origin:0 50%;">Trace sales team build</div>
<div class="t ms" style="left:64.8px;top:390.6px;font-size:11.4px;transform:scaleX(0.8101);transform-origin:0 50%;">Files</div>
<div class="t" style="left:204.5px;top:323.5px;color:#7c7a7a;font-size:11.4px;letter-spacing:-0.245px;">Results</div>
<div class="a" style="left:203px;top:340px;width:539px;height:209px;border:1px solid #000;background:#ababab;overflow:hidden;box-shadow:0 0 0 1px #f8f8fa">
<div class="a" style="left:0;top:0;width:539px;height:20px;background:#c4c4c4"></div>
<div class="a" style="left:0;top:20px;width:539px;height:1px;background:#8c8c8c"></div>
<div class="a" style="left:0;top:21px;width:539px;height:21px;background:#fff"></div>
<div class="a" style="left:0;top:42px;width:539px;height:1px;background:#a0a0a0"></div>
<div class="a" style="left:0;top:43px;width:539px;height:21px;background:#f5f5f5"></div>
<div class="a" style="left:0;top:64px;width:539px;height:1px;background:#a0a0a0"></div>
<div class="a" style="left:0;top:65px;width:539px;height:21px;background:#fff"></div>
<div class="a" style="left:0;top:86px;width:539px;height:1px;background:#a0a0a0"></div>
<div class="a" style="left:0;top:87px;width:539px;height:21px;background:#f5f5f5"></div>
<div class="a" style="left:0;top:108px;width:539px;height:1px;background:#a0a0a0"></div>
<div class="a" style="left:0;top:109px;width:539px;height:21px;background:#fff"></div>
<div class="a" style="left:0;top:130px;width:539px;height:1px;background:#a0a0a0"></div>
<div class="a" style="left:0;top:131px;width:539px;height:21px;background:#f5f5f5"></div>
<div class="a" style="left:0;top:152px;width:539px;height:1px;background:#a0a0a0"></div>
<div class="a" style="left:0;top:21px;width:50px;height:21px;background:#3399ff"></div>
<div class="a" style="left:50px;top:0;width:1px;height:153px;background:#a0a0a0"></div>
<div class="a" style="left:50px;top:0;width:1px;height:21px;background:#8c8c8c"></div>
<div class="a" style="left:150px;top:0;width:1px;height:153px;background:#a0a0a0"></div>
<div class="a" style="left:150px;top:0;width:1px;height:21px;background:#8c8c8c"></div>
<div class="a" style="left:250px;top:0;width:1px;height:153px;background:#a0a0a0"></div>
<div class="a" style="left:250px;top:0;width:1px;height:21px;background:#8c8c8c"></div>
<div class="a" style="left:350px;top:0;width:1px;height:153px;background:#a0a0a0"></div>
<div class="a" style="left:350px;top:0;width:1px;height:21px;background:#8c8c8c"></div>
<div class="t ms" style="left:8.5px;top:3.8000000000000114px;font-size:12.2px;transform:scaleX(0.8297);transform-origin:0 50%;">(line)</div>
<div class="t ms" style="left:58.60000000000002px;top:3.8000000000000114px;font-size:12.2px;transform:scaleX(0.8582);transform-origin:0 50%;">Type</div>
<div class="t ms" style="left:157.60000000000002px;top:3.8000000000000114px;font-size:12.2px;transform:scaleX(0.8476);transform-origin:0 50%;">Input</div>
<div class="t ms" style="left:257.4px;top:3.8000000000000114px;font-size:12.2px;transform:scaleX(0.8226);transform-origin:0 50%;">Columns</div>
<div class="t ms" style="left:358px;top:3.8000000000000114px;font-size:12.2px;transform:scaleX(0.8497);transform-origin:0 50%;">Records</div>
<div class="t ms" style="left:3.6999999999999886px;top:24.80000000000001px;font-size:11.9px;transform:scaleX(0.9244);transform-origin:0 50%;color:#fff;">1</div>
<div class="t ms" style="left:53px;top:24.80000000000001px;font-size:11.9px;transform:scaleX(0.8580);transform-origin:0 50%;">filein</div>
<div class="t ms" style="left:254px;top:24.80000000000001px;font-size:11.9px;transform:scaleX(0.9244);transform-origin:0 50%;">2</div>
<div class="t ms" style="left:354px;top:24.80000000000001px;font-size:11.9px;transform:scaleX(0.9244);transform-origin:0 50%;">3</div>
<div class="t ms" style="left:3.6999999999999886px;top:46.80000000000001px;font-size:11.9px;transform:scaleX(0.9244);transform-origin:0 50%;">2</div>
<div class="t ms" style="left:53px;top:46.80000000000001px;font-size:11.9px;transform:scaleX(0.8580);transform-origin:0 50%;">filein</div>
<div class="t ms" style="left:254px;top:46.80000000000001px;font-size:11.9px;transform:scaleX(0.9244);transform-origin:0 50%;">2</div>
<div class="t ms" style="left:354px;top:46.80000000000001px;font-size:11.9px;transform:scaleX(0.9217);transform-origin:0 50%;">94</div>
<div class="t ms" style="left:3.6999999999999886px;top:68.80000000000001px;font-size:11.9px;transform:scaleX(0.9244);transform-origin:0 50%;">3</div>
<div class="t ms" style="left:53px;top:68.80000000000001px;font-size:11.9px;transform:scaleX(0.8580);transform-origin:0 50%;">filein</div>
<div class="t ms" style="left:254px;top:68.80000000000001px;font-size:11.9px;transform:scaleX(0.9244);transform-origin:0 50%;">4</div>
<div class="t ms" style="left:354px;top:68.80000000000001px;font-size:11.9px;transform:scaleX(0.9217);transform-origin:0 50%;">94</div>
<div class="t ms" style="left:3.6999999999999886px;top:90.80000000000001px;font-size:11.9px;transform:scaleX(0.9244);transform-origin:0 50%;">4</div>
<div class="t ms" style="left:53px;top:90.80000000000001px;font-size:11.9px;transform:scaleX(0.9268);transform-origin:0 50%;">lookup</div>
<div class="t ms" style="left:153px;top:90.80000000000001px;font-size:11.9px;transform:scaleX(0.8871);transform-origin:0 50%;">person-FIN, pers...</div>
<div class="t ms" style="left:254px;top:90.80000000000001px;font-size:11.9px;transform:scaleX(0.9244);transform-origin:0 50%;">5</div>
<div class="t ms" style="left:354px;top:90.80000000000001px;font-size:11.9px;transform:scaleX(0.9217);transform-origin:0 50%;">94</div>
<div class="t ms" style="left:3.6999999999999886px;top:112.80000000000001px;font-size:11.9px;transform:scaleX(0.9244);transform-origin:0 50%;">5</div>
<div class="t ms" style="left:53px;top:112.80000000000001px;font-size:11.9px;transform:scaleX(0.9268);transform-origin:0 50%;">lookup</div>
<div class="t ms" style="left:153px;top:112.80000000000001px;font-size:11.9px;transform:scaleX(0.8777);transform-origin:0 50%;">sales manager-L...</div>
<div class="t ms" style="left:254px;top:112.80000000000001px;font-size:11.9px;transform:scaleX(0.9244);transform-origin:0 50%;">7</div>
<div class="t ms" style="left:354px;top:112.80000000000001px;font-size:11.9px;transform:scaleX(0.9217);transform-origin:0 50%;">94</div>
<div class="t ms" style="left:3.6999999999999886px;top:134.8px;font-size:11.9px;transform:scaleX(0.9244);transform-origin:0 50%;">6</div>
<div class="t ms" style="left:53px;top:134.8px;font-size:11.9px;transform:scaleX(0.8742);transform-origin:0 50%;">calc</div>
<div class="t ms" style="left:153px;top:134.8px;font-size:11.9px;transform:scaleX(0.8788);transform-origin:0 50%;">team-LKP</div>
<div class="t ms" style="left:254px;top:134.8px;font-size:11.9px;transform:scaleX(0.9244);transform-origin:0 50%;">9</div>
<div class="t ms" style="left:354px;top:134.8px;font-size:11.9px;transform:scaleX(0.9217);transform-origin:0 50%;">94</div>
<div class="a" style="left:0;top:192px;width:539px;height:17px;background:#fff"></div>
<div class="a" style="left:148px;top:193px;width:373px;height:15px;background:#777779"></div>
<svg style="left:5px;top:196px" width="6" height="9" viewBox="0 0 6 9"><path d="M5.5 0 V9 L0.5 4.5 Z" fill="#6e6e6e"/></svg>
<svg style="left:528px;top:196px" width="6" height="9" viewBox="0 0 6 9"><path d="M0.5 0 V9 L5.5 4.5 Z" fill="#6e6e6e"/></svg>
</div>
<div class="a" style="left:200px;top:316px;width:539px;height:178px;border:2px solid #8b0000;box-sizing:content-box"></div><div class="a" style="left:202px;top:318px;width:539px;height:1px;background:#8b0000;opacity:0.3"></div>
<svg style="left:0;top:0" width="852" height="593" viewBox="0 0 852 593"><path d="M133.4 388 L197.6 414.4" stroke="#851216" stroke-width="2.3" fill="none"/><path d="M182 400 L198.8 415 L175.4 415.3" stroke="#851216" stroke-width="2.3" fill="none" stroke-linejoin="miter"/></svg>
<div class="a" style="left:224px;top:554px;width:44px;height:22px;background:#fbfbfd"></div>
<div class="t" style="left:43.75px;top:559px;font-size:11.6px;letter-spacing:-0.241px;">sales team build (task)</div>
<div class="t" style="left:162.5px;top:559px;font-size:11.6px;letter-spacing:-0.446px;">Parameters</div>
<div class="t" style="left:227px;top:559px;font-size:11.6px;letter-spacing:-0.154px;color:#0e70c0">Results</div>
<div class="t" style="left:272.7px;top:559px;font-size:11.6px;letter-spacing:-0.714px;">Logs</div>
<div class="t" style="left:304.4px;top:559px;font-size:11.6px;letter-spacing:-0.396px;">Columns</div>
<div class="t" style="left:356.2px;top:559px;font-size:11.6px;letter-spacing:-0.276px;">Input/Output Files</div>
</body></html>
